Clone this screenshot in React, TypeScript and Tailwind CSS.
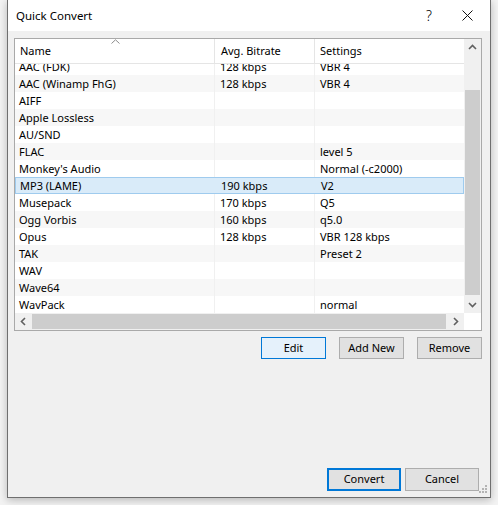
import React from "react";

type Row = { name: string; bitrate: string; settings: string };

const rows: Row[] = [
  { name: "AAC (FDK)", bitrate: "128 kbps", settings: "VBR 4" },
  { name: "AAC (Winamp FhG)", bitrate: "128 kbps", settings: "VBR 4" },
  { name: "AIFF", bitrate: "", settings: "" },
  { name: "Apple Lossless", bitrate: "", settings: "" },
  { name: "AU/SND", bitrate: "", settings: "" },
  { name: "FLAC", bitrate: "", settings: "level 5" },
  { name: "Monkey's Audio", bitrate: "", settings: "Normal (-c2000)" },
  { name: "MP3 (LAME)", bitrate: "190 kbps", settings: "V2" },
  { name: "Musepack", bitrate: "170 kbps", settings: "Q5" },
  { name: "Ogg Vorbis", bitrate: "160 kbps", settings: "q5.0" },
  { name: "Opus", bitrate: "128 kbps", settings: "VBR 128 kbps" },
  { name: "TAK", bitrate: "", settings: "Preset 2" },
  { name: "WAV", bitrate: "", settings: "" },
  { name: "Wave64", bitrate: "", settings: "" },
  { name: "WavPack", bitrate: "", settings: "normal" },
];

const SELECTED = 7;

// small scrollbar chevron, rotated per direction
const Chevron = ({ dir }: { dir: "up" | "down" | "left" | "right" }) => {
  const rot = { up: 0, down: 180, left: -90, right: 90 }[dir];
  return (
    <svg width="9" height="9" viewBox="0 0 9 9" style={{ transform: `rotate(${rot}deg)` }}>
      <path d="M1 6 L4.5 2.5 L8 6" fill="none" stroke="#606060" strokeWidth="1.6" />
    </svg>
  );
};

const Button = ({
  label,
  className,
}: {
  label: string;
  className: string;
}) => (
  <button className={`flex items-center justify-center text-[11px] text-black ${className}`}>
    {label}
  </button>
);

export default function App() {
  return (
    <div
      className="w-[498px] h-[505px] bg-[#f3f3f3] overflow-hidden"
      style={{ fontFamily: '"Noto Sans", "Open Sans", sans-serif' }}
    >
      <div className="relative ml-[7px] w-[484px] h-[498px] flex flex-col border-x border-b border-[#6f6f6f] shadow-[0_2px_8px_rgba(0,0,0,0.25)]">
        {/* Title bar */}
        <div className="h-[31px] bg-white flex items-center pl-[8px] shrink-0">
          <span className="text-[11.5px] text-black">Quick Convert</span>
          <span className="ml-auto mr-[30px] text-[14px] font-light text-black leading-none">?</span>
          <svg width="11" height="11" viewBox="0 0 11 11" className="mr-[17px]">
            <path d="M0.5 0.5 L10.5 10.5 M10.5 0.5 L0.5 10.5" stroke="#111" strokeWidth="1" />
          </svg>
        </div>

        {/* Body */}
        <div className="flex-1 bg-[#f0f0f0] flex flex-col pt-[7px] pl-[6px] pr-[8px] pb-[6px]">
          {/* List view */}
          <div className="w-[468px] h-[293px] border border-[#a9a9a9] bg-white flex flex-col">
            <div className="flex h-[274px]">
              <div className="w-[449px] flex flex-col">
                {/* Header */}
                <div className="relative h-[25px] shrink-0 grid grid-cols-[200px_100px_149px] border-b border-[#e5e5e5] text-[11px] text-black">
                  <div className="border-r border-[#e5e5e5] pl-[5px] flex items-center pt-[1px]">Name</div>
                  <div className="border-r border-[#e5e5e5] pl-[6px] flex items-center pt-[1px]">Avg. Bitrate</div>
                  <div className="pl-[5px] flex items-center pt-[1px]">Settings</div>
                  <svg width="9" height="5" viewBox="0 0 9 5" className="absolute left-[96px] top-0">
                    <path d="M0.5 4.5 L4.5 0.8 L8.5 4.5" fill="none" stroke="#8c8c8c" strokeWidth="1" />
                  </svg>
                </div>
                {/* Rows (list scrolled a few pixels, first row clipped under header) */}
                <div className="flex-1 overflow-hidden">
                  <div className="-mt-[6px]">
                    {rows.map((r, i) => {
                      const sel = i === SELECTED;
                      const bg = sel ? "bg-[#d9ebf9] border border-[#9fcbee]" : i % 2 === 1 ? "bg-[#f7f7f7]" : "bg-white";
                      return (
                        <div
                          key={r.name}
                          className={`grid grid-cols-[200px_100px_149px] h-[17px] text-[11px] leading-none text-black ${bg}`}
                        >
                          <div className={`flex items-center pl-[4px] ${sel ? "" : "border-r border-[#f0f0f0]"}`}>{r.name}</div>
                          <div className={`flex items-center pl-[5px] ${sel ? "" : "border-r border-[#f0f0f0]"}`}>{r.bitrate}</div>
                          <div className="flex items-center pl-[5px]">{r.settings}</div>
                        </div>
                      );
                    })}
                  </div>
                </div>
              </div>
              {/* Vertical scrollbar */}
              <div className="w-[17px] bg-[#f0f0f0] flex flex-col">
                <div className="h-[17px] flex items-center justify-center">
                  <Chevron dir="up" />
                </div>
                <div className="h-[34px]" />
                <div className="h-[205px] mx-[1px] bg-[#cdcdcd]" />
                <div className="flex-1 flex items-center justify-center">
                  <Chevron dir="down" />
                </div>
              </div>
            </div>
            {/* Horizontal scrollbar */}
            <div className="flex h-[17px]">
              <div className="w-[449px] bg-[#f0f0f0] flex items-center">
                <div className="w-[17px] h-full flex items-center justify-center">
                  <Chevron dir="left" />
                </div>
                <div className="w-[414px] h-[15px] bg-[#cdcdcd]" />
                <div className="flex-1 h-full flex items-center justify-center">
                  <Chevron dir="right" />
                </div>
              </div>
              <div className="flex-1 bg-white" />
            </div>
          </div>

          {/* List actions */}
          <div className="flex justify-end gap-[13px] mt-[6px]">
            <Button label="Edit" className="w-[65px] h-[22px] bg-[#e5f1fb] border border-[#0078d7]" />
            <Button label="Add New" className="w-[65px] h-[22px] bg-[#e1e1e1] border border-[#adadad]" />
            <Button label="Remove" className="w-[65px] h-[22px] bg-[#e1e1e1] border border-[#adadad]" />
          </div>

          {/* Dialog buttons */}
          <div className="mt-auto flex justify-end gap-[4px] pr-[3px]">
            <Button label="Convert" className="w-[74px] h-[23px] bg-[#e1e1e1] border-2 border-[#0078d7]" />
            <Button label="Cancel" className="w-[74px] h-[23px] bg-[#e1e1e1] border border-[#adadad]" />
          </div>
        </div>

        {/* Resize grip */}
        <svg width="9" height="9" viewBox="0 0 9 9" className="absolute right-[2px] bottom-[3px]">
          <g fill="#b4b4b4">
            <rect x="6" y="0" width="2" height="2" />
            <rect x="3" y="3" width="2" height="2" />
            <rect x="6" y="3" width="2" height="2" />
            <rect x="0" y="6" width="2" height="2" />
            <rect x="3" y="6" width="2" height="2" />
            <rect x="6" y="6" width="2" height="2" />
          </g>
        </svg>
      </div>
    </div>
  );
}
